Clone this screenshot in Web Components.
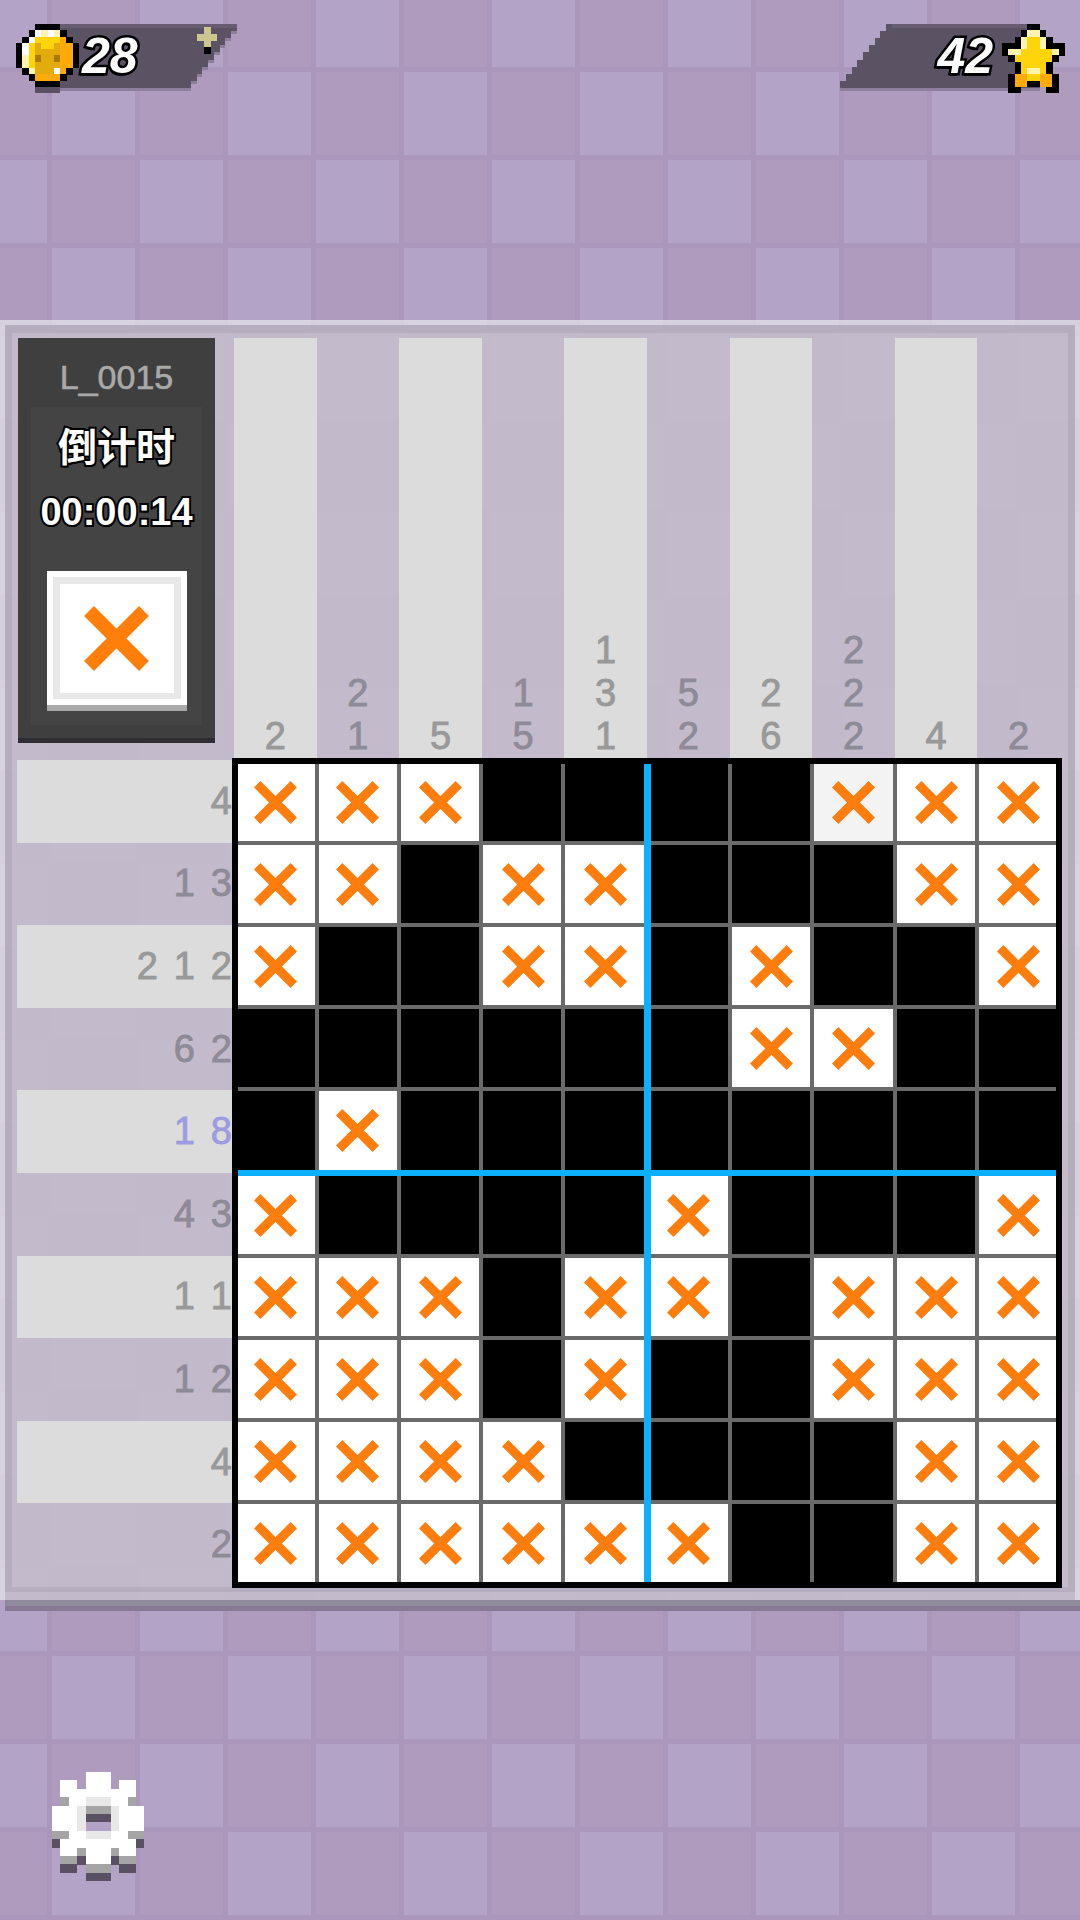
<!DOCTYPE html>
<html lang="zh">
<head>
    <meta charset="UTF-8">
    <title>数织</title>
    <style>
        html, body { margin: 0; padding: 0; }
        body { font-family: "Liberation Sans", "Noto Sans CJK SC", sans-serif; }
    </style>
</head>
<body>
    <pn-app>
        <pn-topbar>
            <pn-badge slot="left" side="left" value="28"></pn-badge>
            <pn-badge slot="right" side="right" value="42"></pn-badge>
        </pn-topbar>
        <pn-panel>
            <pn-info slot="info" level="L_0015" label="倒计时" time="00:00:14"></pn-info>
            <pn-col-clues slot="cols">
                <pn-col-clue>2</pn-col-clue>
                <pn-col-clue>2<br>1</pn-col-clue>
                <pn-col-clue>5</pn-col-clue>
                <pn-col-clue>1<br>5</pn-col-clue>
                <pn-col-clue>1<br>3<br>1</pn-col-clue>
                <pn-col-clue>5<br>2</pn-col-clue>
                <pn-col-clue>2<br>6</pn-col-clue>
                <pn-col-clue>2<br>2<br>2</pn-col-clue>
                <pn-col-clue>4</pn-col-clue>
                <pn-col-clue>2</pn-col-clue>
            </pn-col-clues>
            <pn-row-clues slot="rows">
                <pn-row-clue>4</pn-row-clue>
                <pn-row-clue>1 3</pn-row-clue>
                <pn-row-clue>2 1 2</pn-row-clue>
                <pn-row-clue>6 2</pn-row-clue>
                <pn-row-clue active>1 8</pn-row-clue>
                <pn-row-clue>4 3</pn-row-clue>
                <pn-row-clue>1 1</pn-row-clue>
                <pn-row-clue>1 2</pn-row-clue>
                <pn-row-clue>4</pn-row-clue>
                <pn-row-clue>2</pn-row-clue>
            </pn-row-clues>
            <pn-grid slot="grid" cells="xxx####oxx,xx#xx###xx,x##xx#x##x,######xx##,#x########,x####x###x,xxx#xx#xxx,xxx#x##xxx,xxxx####xx,xxxxxx##xx"></pn-grid>
        </pn-panel>
        <pn-footer>
            <pn-sprite name="gear" px="8.4"></pn-sprite>
        </pn-footer>
    </pn-app>

    <script>
        "use strict";

        const PALETTE = {
            k: "#000000", w: "#ffffff", c: "#fff3b0", y: "#ffd40a", d: "#e3ab0c", o: "#ffa90a",
            b: "#ad7a05", s: "#5a5064", g: "#a5a5a5", l: "#e8e8e8", p: "#b3a3c6", m: "#cbc78f"
        };

        const SPRITES = {
            coin: [
                "...kkkk...",
                "..kwcwck..",
                ".kwyyyyok.",
                "kwydyydook",
                "kwyddddook",
                "kcybddbook",
                "kcyddddook",
                ".kcdddwok.",
                "..kooook..",
                "...kkkk...",
                "...ssss..."
            ],
            star: [
                "....kk....",
                "...kcck...",
                "..kcyyck..",
                "kkkcyyckkk",
                "kccyyyyyck",
                ".kyyyyyyk.",
                "..kyyyyk..",
                "..kyccyk..",
                ".kooyyook.",
                ".kookkook.",
                ".kk....kk."
            ],
            plus: [
                ".m.",
                "mmm",
                ".m.",
                ".k."
            ],
            gear: [
                "....www....",
                ".ww.www.ww.",
                ".wwwwwwwww.",
                ".gwwlllwwg.",
                "wwwlgggl" + "www",
                "wwwlsssl" + "www",
                "wwwlpppl" + "www",
                "ggwwlllwwgg",
                "swwwwwwwwws",
                ".wwgwwwgww.",
                ".ggswwwsgg.",
                ".ss.ggg.ss.",
                "....sss...."
            ]
        };

        class PnSprite extends HTMLElement {
            connectedCallback() {
                const rows = SPRITES[this.getAttribute("name")];
                const px = parseFloat(this.getAttribute("px"));
                let rects = "";
                rows.forEach((row, y) => {
                    [...row].forEach((ch, x) => {
                        if (ch !== ".") {
                            rects += `<rect x="${x}" y="${y}" width="1.02" height="1.02" fill="${PALETTE[ch]}"/>`;
                        }
                    });
                });
                const w = rows[0].length, h = rows.length;
                this.attachShadow({ mode: "open" }).innerHTML = `
                    <style>:host { display: block; width: ${w * px}px; height: ${h * px}px; } svg { display: block; }</style>
                    <svg width="${w * px}" height="${h * px}" viewBox="0 0 ${w} ${h}" shape-rendering="crispEdges">${rects}</svg>`;
            }
        }
        customElements.define("pn-sprite", PnSprite);

        class PnApp extends HTMLElement {
            constructor() {
                super();
                this.attachShadow({ mode: "open" }).innerHTML = `
                    <style>
                        :host {
                            display: block;
                            width: 1080px;
                            height: 1920px;
                            overflow: hidden;
                            background-color: #ab97bb;
                            background-image:
                                conic-gradient(at 83px 83px, transparent 270deg, #b3a3c6 270deg),
                                conic-gradient(at 83px 83px, transparent 270deg, #b3a3c6 270deg),
                                conic-gradient(at 83px 83px, transparent 270deg, #ae9bbe 270deg);
                            background-size: 176px 176px, 176px 176px, 88px 88px;
                            background-position: 52px 72px, 140px 160px, 52px 72px;
                        }
                    </style>
                    <slot></slot>`;
            }
        }
        customElements.define("pn-app", PnApp);

        class PnTopbar extends HTMLElement {
            constructor() {
                super();
                this.attachShadow({ mode: "open" }).innerHTML = `
                    <style>
                        :host {
                            display: flex;
                            justify-content: space-between;
                            align-items: flex-start;
                            box-sizing: border-box;
                            height: 320px;
                            padding: 24px 15px 0 16px;
                        }
                    </style>
                    <slot name="left"></slot>
                    <slot name="right"></slot>`;
            }
        }
        customElements.define("pn-topbar", PnTopbar);

        class PnBadge extends HTMLElement {
            connectedCallback() {
                const left = this.getAttribute("side") === "left";
                const W = left ? 177 : 200;
                const steps = 9, stepX = 52 / steps, stepY = 64 / steps;
                let path;
                if (left) {
                    // wide on top, stairs go down and inwards on the right
                    path = `M0 0H${W}`;
                    for (let i = 0; i < steps; i++) {
                        path += `V${((i + 1) * stepY).toFixed(1)}H${(W - (i + 1) * stepX).toFixed(1)}`;
                    }
                    path += "H0Z";
                } else {
                    // wide at the bottom, stairs go up and inwards on the left
                    path = `M${W} 64H0`;
                    for (let i = 0; i < steps; i++) {
                        path += `V${(64 - (i + 1) * stepY).toFixed(1)}H${((i + 1) * stepX).toFixed(1)}`;
                    }
                    path += `H${W}Z`;
                }
                this.attachShadow({ mode: "open" }).innerHTML = `
                    <style>
                        :host {
                            display: flex;
                            flex-direction: ${left ? "row" : "row-reverse"};
                            position: relative;
                            width: ${left ? 221 : 225}px;
                            height: 69px;
                        }
                        svg.plate {
                            position: absolute;
                            top: 0;
                            ${left ? "left: 44px" : "right: 25px"};
                        }
                        pn-sprite { position: relative; flex: none; }
                        .value {
                            position: relative;
                            margin: 5px ${left ? 0 : "9px"} 0 ${left ? "3px" : 0};
                            font: italic bold 50px/54px "Liberation Sans", sans-serif;
                            color: #fff;
                            -webkit-text-stroke: 5px #000;
                            paint-order: stroke fill;
                            text-shadow: -1px 3px 0 #000;
                        }
                        .plus { position: absolute; left: 181px; top: 3px; }
                    </style>
                    <svg class="plate" width="${W}" height="68" viewBox="0 0 ${W} 68" shape-rendering="crispEdges">
                        <path d="${path}" transform="translate(0 3)" fill="#8d7e9b"/>
                        <path d="${path}" fill="#5b5264"/>
                        ${left ? `<rect width="${W}" height="4" fill="#675c72"/>` : `<rect x="${stepX * steps}" width="${W - stepX * steps}" height="4" fill="#675c72"/>`}
                    </svg>
                    <pn-sprite name="${left ? "coin" : "star"}" px="6.3"></pn-sprite>
                    <span class="value">${this.getAttribute("value")}</span>
                    ${left ? '<pn-sprite class="plus" name="plus" px="6.7"></pn-sprite>' : ""}`;
            }
        }
        customElements.define("pn-badge", PnBadge);

        class PnPanel extends HTMLElement {
            constructor() {
                super();
                this.attachShadow({ mode: "open" }).innerHTML = `
                    <style>
                        :host { display: block; height: 1291px; }
                        .edge {
                            height: 1280px;
                            box-sizing: border-box;
                            border: 5px solid rgba(232, 228, 236, 0.72);
                            border-bottom: 0;
                        }
                        .fill {
                            height: 1275px;
                            background: rgba(197, 190, 204, 0.88);
                        }
                        .rim {
                            box-sizing: border-box;
                            height: 1267px;
                            border: solid rgba(130, 120, 145, 0.2);
                            border-width: 8px 7px 5px;
                        }
                        .layout {
                            display: grid;
                            grid-template-columns: 215px 830px;
                            grid-template-rows: 420px 830px;
                            padding: 5px 0 0 5px;
                        }
                        .shadow {
                            height: 11px;
                            margin-left: 5px;
                            background: linear-gradient(#8f8a9c 0 6px, #887a95 6px);
                        }
                        ::slotted([slot="cols"]) { margin-left: 2px; }
                        ::slotted([slot="info"]) { margin-left: 1px; }
                    </style>
                    <div class="edge">
                        <div class="fill">
                            <div class="rim">
                                <div class="layout">
                                    <slot name="info"></slot>
                                    <slot name="cols"></slot>
                                    <slot name="rows"></slot>
                                    <slot name="grid"></slot>
                                </div>
                            </div>
                        </div>
                    </div>
                    <div class="shadow"></div>`;
            }
        }
        customElements.define("pn-panel", PnPanel);

        class PnInfo extends HTMLElement {
            connectedCallback() {
                this.attachShadow({ mode: "open" }).innerHTML = `
                    <style>
                        :host {
                            display: flex;
                            flex-direction: column;
                            box-sizing: border-box;
                            width: 197px;
                            height: 405px;
                            background: #3f3f3f;
                            border-bottom: 5px solid #2e2e32;
                            text-align: center;
                        }
                        .level {
                            height: 69px;
                            font-size: 34px;
                            line-height: 79px;
                            color: #a9a9a9;
                            -webkit-text-stroke: 0.6px #a9a9a9;
                        }
                        .inner {
                            display: flex;
                            flex-direction: column;
                            align-items: center;
                            margin: 0 13px;
                            height: 318px;
                            background: #444444;
                            color: #fff;
                            padding-top: 12px;
                            box-sizing: border-box;
                        }
                        .label, .time {
                            -webkit-text-stroke: 4px #000;
                            paint-order: stroke fill;
                            text-shadow: 1px 2px 0 #000;
                            white-space: nowrap;
                        }
                        .label {
                            font: bold 39px/50px "Noto Sans CJK SC", sans-serif;
                        }
                        .time {
                            margin-top: 18px;
                            font: bold 38px/50px "Liberation Sans", sans-serif;
                        }
                        .button {
                            display: flex;
                            box-sizing: border-box;
                            flex: none;
                            width: 140px;
                            height: 140px;
                            margin-top: 34px;
                            background: #fff;
                            border-bottom: 6px solid #a9a9a9;
                            padding: 6px;
                        }
                        .ring {
                            flex: 1;
                            display: flex;
                            align-items: center;
                            justify-content: center;
                            border: solid #e8e8e8;
                            border-width: 7px 7px 6px;
                        }
                        svg { display: block; }
                    </style>
                    <div class="level">${this.getAttribute("level")}</div>
                    <div class="inner">
                        <div class="label">${this.getAttribute("label")}</div>
                        <div class="time">${this.getAttribute("time")}</div>
                        <div class="button">
                            <div class="ring">
                                <svg width="65" height="65" viewBox="0 0 65 65">
                                    <path d="M5 5L60 60M60 5L5 60" stroke="#ff7f0a" stroke-width="14" fill="none"/>
                                </svg>
                            </div>
                        </div>
                    </div>`;
            }
        }
        customElements.define("pn-info", PnInfo);

        class PnColClues extends HTMLElement {
            constructor() {
                super();
                this.attachShadow({ mode: "open" }).innerHTML = `
                    <style>
                        :host {
                            display: grid;
                            grid-template-columns: repeat(10, 82.6px);
                            height: 420px;
                        }
                    </style>
                    <slot></slot>`;
            }
        }
        customElements.define("pn-col-clues", PnColClues);

        class PnColClue extends HTMLElement {
            constructor() {
                super();
                this.attachShadow({ mode: "open" }).innerHTML = `
                    <style>
                        :host {
                            display: flex;
                            flex-direction: column;
                            justify-content: flex-end;
                            text-align: center;
                            font: 38px/43px "Liberation Sans", sans-serif;
                            color: #8f8a97;
                            -webkit-text-stroke: 0.9px #8f8a97;
                        }
                        :host(:nth-child(odd)) { background: #dcdcdc; color: #999999; -webkit-text-stroke-color: #999999; }
                    </style>
                    <div><slot></slot></div>`;
            }
        }
        customElements.define("pn-col-clue", PnColClue);

        class PnRowClues extends HTMLElement {
            constructor() {
                super();
                this.attachShadow({ mode: "open" }).innerHTML = `
                    <style>
                        :host {
                            display: grid;
                            grid-template-rows: repeat(10, 82.6px);
                            margin-top: 2px;
                            width: 215px;
                        }
                    </style>
                    <slot></slot>`;
            }
        }
        customElements.define("pn-row-clues", PnRowClues);

        class PnRowClue extends HTMLElement {
            constructor() {
                super();
                this.attachShadow({ mode: "open" }).innerHTML = `
                    <style>
                        :host {
                            display: flex;
                            align-items: center;
                            justify-content: flex-end;
                            font: 38px/43px "Liberation Sans", sans-serif;
                            word-spacing: 5.4px;
                            color: #8f8a97;
                            -webkit-text-stroke: 0.9px #8f8a97;
                        }
                        :host(:nth-child(odd)) { background: #dcdcdc; color: #999999; -webkit-text-stroke-color: #999999; }
                        :host([active]), :host([active]:nth-child(odd)) { color: #9c9ce0; -webkit-text-stroke-color: #9c9ce0; }
                    </style>
                    <slot></slot>`;
            }
        }
        customElements.define("pn-row-clue", PnRowClue);

        class PnCell extends HTMLElement {
            connectedCallback() {
                const mark = this.getAttribute("mark");
                const cross = mark === "#" ? "" : `
                    <svg width="43" height="43" viewBox="0 0 43 43">
                        <path d="M3.2 3.2L39.8 39.8M39.8 3.2L3.2 39.8" stroke="#ff7d0d" stroke-width="9" fill="none"/>
                    </svg>`;
                this.attachShadow({ mode: "open" }).innerHTML = `
                    <style>
                        :host {
                            display: flex;
                            align-items: center;
                            justify-content: center;
                            box-sizing: border-box;
                            background: ${mark === "#" ? "#000" : mark === "o" ? "#f3f3f3" : "#fff"};
                        }
                        svg { display: block; }
                    </style>
                    ${cross}`;
            }
        }
        customElements.define("pn-cell", PnCell);

        class PnGrid extends HTMLElement {
            connectedCallback() {
                const rows = this.getAttribute("cells").split(",");
                const cells = rows.map(r => [...r].map(m => `<pn-cell mark="${m}"></pn-cell>`).join("")).join("");
                this.attachShadow({ mode: "open" }).innerHTML = `
                    <style>
                        :host {
                            display: block;
                            position: relative;
                            box-sizing: border-box;
                            width: 830px;
                            height: 830px;
                            border: 6px solid #000;
                            background: #6a6a6a;
                        }
                        .cells {
                            display: grid;
                            gap: 4px;
                            grid-template-columns: 77px 78px 78px 78px 82px 77px 78px 79px 78px 77px;
                            grid-template-rows: 77px 78px 78px 78px 81px 78px 78px 78px 78px 78px;
                        }
                        /* small nudges so the crosses sit like in the game; the blue lines cover the last px of the middle column and row */
                        pn-cell:nth-child(10n+1), pn-cell:nth-child(10n+2), pn-cell:nth-child(10n+6) { padding-right: 2px; }
                        pn-cell:nth-child(10n+4), pn-cell:nth-child(10n) { padding-left: 2px; }
                        pn-cell:nth-child(10n+5) { padding-right: 1px; }
                        pn-cell:nth-child(n+41):nth-child(-n+50) { padding-bottom: 3px; }
                        .line { position: absolute; background: #0bb1ff; }
                        .v { left: 406px; top: 0; bottom: 0; width: 7px; }
                        .h { top: 406px; left: 0; right: 0; height: 6px; }
                    </style>
                    <div class="cells">${cells}</div>
                    <div class="line v"></div>
                    <div class="line h"></div>`;
            }
        }
        customElements.define("pn-grid", PnGrid);

        class PnFooter extends HTMLElement {
            constructor() {
                super();
                this.attachShadow({ mode: "open" }).innerHTML = `
                    <style>
                        :host { display: block; padding: 161px 0 0 52px; }
                    </style>
                    <slot></slot>`;
            }
        }
        customElements.define("pn-footer", PnFooter);
    </script>
</body>
</html>
